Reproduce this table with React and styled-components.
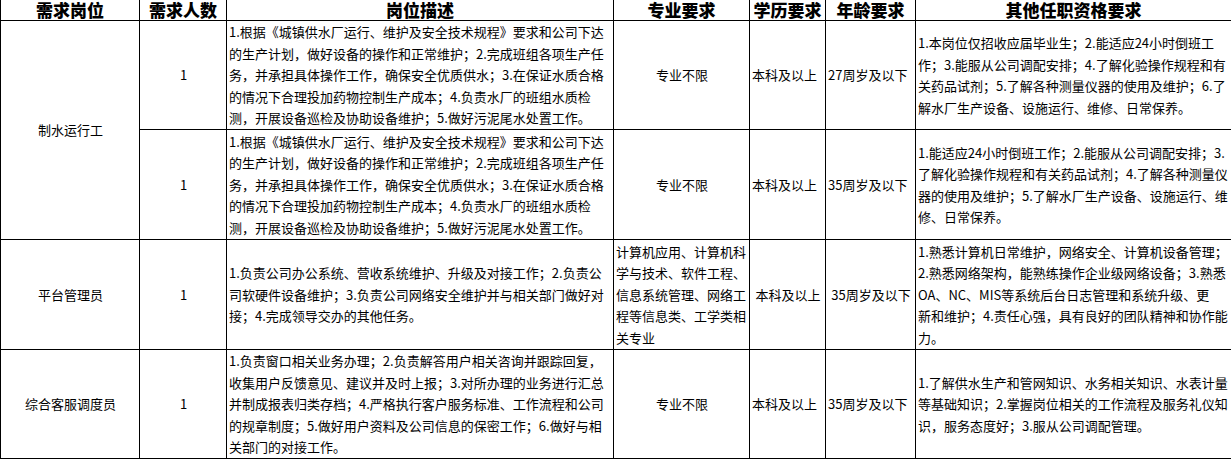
import React from 'react';
import styled, { createGlobalStyle } from 'styled-components';

const GlobalStyle = createGlobalStyle`
    html, body { margin: 0; padding: 0; background: #fff; }
    body { font-family: "Noto Sans CJK SC", "Microsoft YaHei", sans-serif; color: #000; }
`;

const desc1 = [
    '1.根据《城镇供水厂运行、维护及安全技术规程》要求和公司下达',
    '的生产计划，做好设备的操作和正常维护；2.完成班组各项生产任',
    '务，并承担具体操作工作，确保安全优质供水；3.在保证水质合格',
    '的情况下合理投加药物控制生产成本；4.负责水厂的班组水质检',
    '测，开展设备巡检及协助设备维护；5.做好污泥尾水处置工作。',
];

const rows = [
    {
        post: '制水运行工', span: 2, height: 109, count: '1', desc: desc1,
        major: ['专业不限'], edu: '本科及以上', age: '27周岁及以下',
        other: [
            '1.本岗位仅招收应届毕业生；2.能适应24小时倒班工',
            '作；3.能服从公司调配安排；4.了解化验操作规程和有',
            '关药品试剂；5.了解各种测量仪器的使用及维护；6.了',
            '解水厂生产设备、设施运行、维修、日常保养。',
        ],
    },
    {
        height: 110, count: '1', desc: desc1,
        major: ['专业不限'], edu: '本科及以上', age: '35周岁及以下',
        other: [
            '1.能适应24小时倒班工作；2.能服从公司调配安排；3.',
            '了解化验操作规程和有关药品试剂；4.了解各种测量仪',
            '器的使用及维护；5.了解水厂生产设备、设施运行、维',
            '修、日常保养。',
        ],
    },
    {
        post: '平台管理员', span: 1, height: 110, count: '1',
        desc: [
            '1.负责公司办公系统、营收系统维护、升级及对接工作；2.负责公',
            '司软硬件设备维护；3.负责公司网络安全维护并与相关部门做好对',
            '接；4.完成领导交办的其他任务。',
        ],
        major: [
            '计算机应用、计算机科',
            '学与技术、软件工程、',
            '信息系统管理、网络工',
            '程等信息类、工学类相',
            '关专业',
        ],
        edu: '本科及以上', age: '35周岁及以下', centered: true,
        other: [
            '1.熟悉计算机日常维护，网络安全、计算机设备管理；',
            '2.熟悉网络架构，能熟练操作企业级网络设备；3.熟悉',
            'OA、NC、MIS等系统后台日志管理和系统升级、更',
            '新和维护；4.责任心强，具有良好的团队精神和协作能',
            '力。',
        ],
    },
    {
        post: '综合客服调度员', span: 1, height: 109, count: '1',
        desc: [
            '1.负责窗口相关业务办理；2.负责解答用户相关咨询并跟踪回复，',
            '收集用户反馈意见、建议并及时上报；3.对所办理的业务进行汇总',
            '并制成报表归类存档；4.严格执行客户服务标准、工作流程和公司',
            '的规章制度；5.做好用户资料及公司信息的保密工作；6.做好与相',
            '关部门的对接工作。',
        ],
        major: ['专业不限'], edu: '本科及以上', age: '35周岁及以下',
        other: [
            '1.了解供水生产和管网知识、水务相关知识、水表计量',
            '等基础知识；2.掌握岗位相关的工作流程及服务礼仪知',
            '识，服务态度好；3.服从公司调配管理。',
        ],
    },
];

const cols = [139, 87, 387, 136, 76, 90, 316];
const heads = ['需求岗位', '需求人数', '岗位描述', '专业要求', '学历要求', '年龄要求', '其他任职资格要求'];

const Lines = ({ lines }) => lines.map((l, i) => <Line key={i}>{l}</Line>);

export default function App() {
    return (
        <>
            <GlobalStyle />
            <Sheet>
                <colgroup>
                    {cols.map((w, i) => <col key={i} style={{ width: w }} />)}
                </colgroup>
                <thead>
                    <tr>
                        {heads.map((h) => <Head key={h}>{h}</Head>)}
                    </tr>
                </thead>
                <tbody>
                    {rows.map((r, i) => (
                        <tr key={i} style={{ height: r.height }}>
                            {r.post && <Cell $align="center" rowSpan={r.span}>{r.post}</Cell>}
                            <Cell $align="center">{r.count}</Cell>
                            <Cell><Lines lines={r.desc} /></Cell>
                            <Cell $align={r.major.length > 1 ? 'left' : 'center'}><Lines lines={r.major} /></Cell>
                            <Cell $align={r.centered ? 'center' : 'left'}>{r.edu}</Cell>
                            <Cell $align={r.centered ? 'center' : 'left'}>{r.age}</Cell>
                            <Cell><Lines lines={r.other} /></Cell>
                        </tr>
                    ))}
                </tbody>
            </Sheet>
        </>
    );
}

const Sheet = styled.table`
    width: 1231px;
    table-layout: fixed;
    border-collapse: collapse;
    border-spacing: 0;
`;

const Head = styled.th`
    height: 20px;
    padding: 0;
    border: 1px solid #000;
    border-top: 0;
    font-size: 17px;
    font-weight: 900;
    line-height: 20px;
    text-align: center;
    vertical-align: middle;
    white-space: nowrap;
`;

const Cell = styled.td`
    padding: 0 1px 0 2px;
    border: 1px solid #000;
    font-size: 13px;
    line-height: 21.5px;
    text-align: ${(p) => p.$align || 'left'};
    vertical-align: middle;
    overflow: hidden;
    white-space: nowrap;
`;

const Line = styled.div`
    white-space: nowrap;
`;
